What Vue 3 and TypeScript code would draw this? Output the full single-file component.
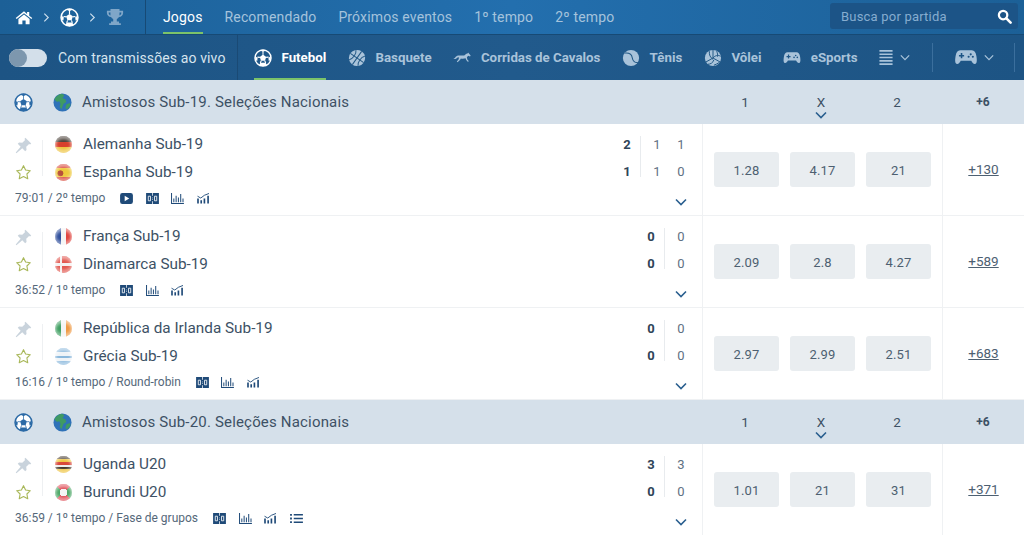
<script setup lang="ts">
interface Game {
  home: string
  away: string
  flags: [string, string]
  info: string
  scores: string[][]
  odds: string[]
  more: string
  play?: boolean
  list?: boolean
}
interface League {
  title: string
  games: Game[]
}

const tabs = ['Jogos', 'Recomendado', 'Próximos eventos', '1º tempo', '2º tempo']
const sports = [
  { name: 'Futebol', icon: 'ball', active: true },
  { name: 'Basquete', icon: 'basket' },
  { name: 'Corridas de Cavalos', icon: 'horse' },
  { name: 'Tênis', icon: 'tennis' },
  { name: 'Vôlei', icon: 'volley' },
  { name: 'eSports', icon: 'pad' },
]
const leagues: League[] = [
  {
    title: 'Amistosos Sub-19. Seleções Nacionais',
    games: [
      { home: 'Alemanha Sub-19', away: 'Espanha Sub-19', flags: ['de', 'es'], info: '79:01 / 2º tempo', scores: [['2', '1'], ['1', '1'], ['1', '0']], odds: ['1.28', '4.17', '21'], more: '+130', play: true },
      { home: 'França Sub-19', away: 'Dinamarca Sub-19', flags: ['fr', 'dk'], info: '36:52 / 1º tempo', scores: [['0', '0'], ['0', '0']], odds: ['2.09', '2.8', '4.27'], more: '+589' },
      { home: 'República da Irlanda Sub-19', away: 'Grécia Sub-19', flags: ['ie', 'gr'], info: '16:16 / 1º tempo / Round-robin', scores: [['0', '0'], ['0', '0']], odds: ['2.97', '2.99', '2.51'], more: '+683' },
    ],
  },
  {
    title: 'Amistosos Sub-20. Seleções Nacionais',
    games: [
      { home: 'Uganda U20', away: 'Burundi U20', flags: ['ug', 'bi'], info: '36:59 / 1º tempo / Fase de grupos', scores: [['3', '0'], ['3', '0']], odds: ['1.01', '21', '31'], more: '+371', list: true },
    ],
  },
]
</script>

<template>
  <div class="page">
    <header class="top">
      <div class="crumbs">
        <svg class="home" viewBox="0 0 20 16"><path d="M10 1 0.8 8.600l1 1.200L10 3.200l8.200 6.600 1-1.200L15.800 6V2h-2.400v2L10 1zM3.800 9.600V15.400h4.400v-4h3.600v4h4.400V9.600L10 4.600 3.800 9.600z" fill="#fff" /></svg>
        <svg class="gt" viewBox="0 0 8 12"><path d="M1.500 1.500 6 6l-4.500 4.500" /></svg>
        <svg class="sport" viewBox="0 0 20 20">
          <use href="#ball" />
        </svg>
        <svg class="gt" viewBox="0 0 8 12"><path d="M1.500 1.500 6 6l-4.500 4.500" /></svg>
        <svg class="cup" viewBox="0 0 20 20"><path d="M5 1h10v2h4v2.500c0 2.600-2 4.300-4.600 4.600-.6 1-1.400 1.700-2.400 2.100V15h2.500v2h2v2H3.500v-2h2v-2H8v-2.800c-1-.4-1.800-1.100-2.400-2.100C3 9.800 1 8.100 1 5.500V3h4V1zM3 5v.5c0 1.300.8 2.300 2 2.700A12 12 0 0 1 5 5H3zm12 0c0 1.100 0 2.200-.1 3.200 1.300-.4 2.100-1.400 2.100-2.700V5h-2z" fill="#7fa6c8" /></svg>
      </div>
      <nav class="tabs">
        <a v-for="(t, i) in tabs" :key="t" class="tab" :class="{ on: i === 0 }">{{ t }}</a>
      </nav>
      <div class="search">
        <span>Busca por partida</span>
        <svg viewBox="0 0 16 16"><circle cx="6.500" cy="6.500" r="4.500" fill="none" stroke="#fff" stroke-width="2.400" /><path d="m10 10 4.500 4.500" stroke="#fff" stroke-width="2.800" stroke-linecap="round" /></svg>
      </div>
    </header>

    <div class="sub">
      <div class="live">
        <span class="toggle"><i></i></span>
        <span>Com transmissões ao vivo</span>
      </div>
      <div class="sports">
        <a v-for="s in sports" :key="s.name" class="sp" :class="{ on: s.active }">
          <svg class="sp-ic" :viewBox="s.icon === 'horse' ? '0 0 24 24' : s.icon === 'pad' ? '0 0 22 20' : '0 0 20 20'">
            <use v-if="s.icon === 'ball'" href="#ball" />
            <g v-else-if="s.icon === 'basket'" transform="rotate(35 10 10)">
              <circle cx="10" cy="10" r="9" fill="#a9c3da" />
              <path d="M10 1v18M1 10h18M4 3.500c3 3 3 10 0 13M16 3.500c-3 3-3 10 0 13" fill="none" stroke="#215784" stroke-width="1.100" />
            </g>
            <path v-else-if="s.icon === 'horse'" d="M0.500 13c1.500-.3 2.500-1.800 3.500-3 1-1 2.200-1.500 4-1.500h7c1.500-1.600 3.200-2.700 5-3l.5-1 .5 1.200 2.500 3-.8 1.300-2.400-.9-1.800 1.800.6 3 1.900 2.100-1 1.300-2.400-2.600-.8-2.400c-1.800.7-4.500.8-6.300.4l-1.200 2-3.200 2.800-1-1 2.300-2.600.6-2.600-1.500-.4C4.800 12.500 3 14 .5 13z" fill="#a9c3da" />
            <g v-else-if="s.icon === 'tennis'">
              <circle cx="10" cy="10" r="9" fill="#a9c3da" />
              <path d="M2.800 4.500c4.500-.5 8 1 8.500 5s3.500 6 6.200 5.500" fill="none" stroke="#215784" stroke-width="1.200" />
            </g>
            <g v-else-if="s.icon === 'volley'">
              <circle cx="10" cy="10" r="9" fill="#a9c3da" />
              <path d="M10 10V1M10 10l8 4.500M10 10l-8 4.500M6 2.500c-.5 4 1 7 4 9M18.500 8c-3-1.500-6-1-8.500 2M4 17c3 0 6-1.500 7-5M14 2.500c1 2 1.500 4 1 6M17 15c-2 1-4 2.500-6 3" fill="none" stroke="#215784" stroke-width="1.100" />
            </g>
            <use v-else href="#pad" />
          </svg>
          <span>{{ s.name }}</span>
        </a>
        <div class="menu-ic">
          <svg class="bars" viewBox="0 0 14 16"><path d="M0 1h14M0 4.500h14M0 8h14M0 11.500h14M0 15h14" stroke="#a9c3da" stroke-width="1.800" /></svg>
          <svg class="dn" viewBox="0 0 12 8"><path d="m1 1.500 5 5 5-5" /></svg>
        </div>
        <div class="pad-box">
          <svg class="pad-big" viewBox="0 0 22 20"><use href="#pad" /></svg>
          <svg class="dn" viewBox="0 0 12 8"><path d="m1 1.500 5 5 5-5" /></svg>
        </div>
      </div>
    </div>

    <section v-for="l in leagues" :key="l.title">
      <div class="league">
        <div class="lg-left">
          <svg class="lg-ball" viewBox="0 0 20 20"><use href="#ball-dark" /></svg>
          <svg class="globe" viewBox="0 0 20 20">
            <circle cx="10" cy="10" r="9.500" fill="#2f72b8" />
            <path d="M9 .8C5.500 1.500 2.500 4 1.500 7l3 2.500 2-1 1.500 3-1 3 2 2.500 2-5.500 3-2-1-3-3-1 2-3.500zM14 12l3.500-1.500 1 2.500-3.500 4-2-1z" fill="#3f9a63" />
          </svg>
          <span>{{ l.title }}</span>
        </div>
        <div class="lg-odds">
          <span>1</span>
          <span class="x">X<svg viewBox="0 0 12 8"><path d="m1 1.500 5 5 5-5" /></svg></span>
          <span>2</span>
        </div>
        <div class="lg-more">+6</div>
      </div>

      <div v-for="g in l.games" :key="g.home" class="game">
        <div class="main">
          <div class="teams">
            <div class="marks">
              <svg class="pin" viewBox="0 0 18 18"><path d="M11 .8l6.200 6.200-1.200 1-1.100-.7-3 3 .3 3.400-1.400 1.400-3.100-3.100L1.500 17.200l-.7-.7 5.200-6.200-3.100-3.100 1.400-1.400 3.400.3 3-3-.7-1.100z" fill="#c9d3dc" /></svg>
              <svg class="star" viewBox="0 0 18 18"><path d="m9 1.800 2.200 4.600 5 .7-3.600 3.500.9 5L9 13.200l-4.500 2.400.9-5L1.800 7.100l5-.7z" fill="none" stroke="#a9b85a" stroke-width="1.200" stroke-linejoin="round" /></svg>
            </div>
            <div class="names">
              <div class="name"><i class="flag" :class="g.flags[0]"></i>{{ g.home }}</div>
              <div class="name"><i class="flag" :class="g.flags[1]"></i>{{ g.away }}</div>
            </div>
            <div class="score">
              <div v-for="(c, i) in g.scores" :key="i" class="col" :class="{ first: i === 0 }">
                <b v-if="i === 0">{{ c[0] }}</b><span v-else>{{ c[0] }}</span>
                <b v-if="i === 0">{{ c[1] }}</b><span v-else>{{ c[1] }}</span>
              </div>
            </div>
          </div>
          <div class="info">
            <span class="time">{{ g.info }}</span>
            <svg v-if="g.play" class="ic" viewBox="0 0 14 12"><rect width="14" height="12" rx="2.500" fill="#1f4a78" /><path d="M5 3v6l5-3z" fill="#fff" /></svg>
            <svg class="ic" viewBox="0 0 14 12"><path d="M0 0h14v12H0z" fill="#1f4a78" /><path d="M7 0v3M7 9v3M7 5v.8M7 6.800v.8" stroke="#fff" stroke-width=".8" /><path d="M2.400 3.500h2.400v5H2.400zM9.200 3.500h2.400v5H9.200z" fill="none" stroke="#fff" stroke-width=".9" /></svg>
            <svg class="ic" viewBox="0 0 14 12"><path d="M.5 0v11.500H14M3 6v4M5.500 3v7M8 5v5M10.500 1v9M13 6v4" fill="none" stroke="#1f4a78" stroke-width="1.100" /></svg>
            <svg class="ic" viewBox="0 0 14 12"><path d="M1 6v5.500M4.500 8v3.500M8 6v5.500M12 3v8.500" fill="none" stroke="#1f4a78" stroke-width="1.800" /><path d="M.5 3.500l3.500 2L8 2.500l5-2" fill="none" stroke="#1f4a78" /></svg>
            <svg v-if="g.list" class="ic" viewBox="0 0 14 12"><path d="M4 2h10M4 6h10M4 10h10" stroke="#1f4a78" stroke-width="1.600" /><path d="M0 1h2v2H0zM0 5h2v2H0zM0 9h2v2H0z" fill="#1f4a78" /></svg>
          </div>
          <svg class="expand" viewBox="0 0 12 8"><path d="m1 1.500 5 5 5-5" /></svg>
        </div>
        <div class="odds">
          <button v-for="o in g.odds" :key="o" class="odd">{{ o }}</button>
        </div>
        <div class="more"><a>{{ g.more }}</a></div>
      </div>
    </section>

    <svg width="0" height="0" class="defs">
      <defs>
        <g id="ball">
          <circle cx="10" cy="10" r="8.900" fill="none" stroke="#fff" stroke-width="1.600" />
          <path d="M10 6.200l3.600 2.600-1.400 4.200H7.800L6.400 8.800zM6.800 1.500 10 3.400l3.200-1.900-.6-.8H7.400zM1.300 8l2.700 1.800-.4 3.400-2-1.100zM18.700 8 16 9.800l.4 3.400 2-1.100zM5.800 17.800l1.200-2.500h6l1.200 2.500-4.200 1.300z" fill="#fff" />
          <path d="M10 3v3.500M3.800 9l2.800.3M16.200 9l-2.800.3M7 15.500 8 13M13 15.500 12 13" stroke="#fff" stroke-width="1.200" />
        </g>
        <g id="ball-dark">
          <circle cx="10" cy="10" r="8.900" fill="#fff" stroke="#2b6aa6" stroke-width="1.600" />
          <path d="M10 6.200l3.600 2.600-1.400 4.200H7.800L6.400 8.800zM6.800 1.500 10 3.400l3.200-1.900-.6-.8H7.400zM1.300 8l2.700 1.800-.4 3.400-2-1.100zM18.700 8 16 9.800l.4 3.400 2-1.100zM5.800 17.800l1.200-2.500h6l1.200 2.500-4.200 1.300z" fill="#2b6aa6" />
          <path d="M10 3v3.500M3.800 9l2.800.3M16.200 9l-2.800.3M7 15.500 8 13M13 15.500 12 13" stroke="#2b6aa6" stroke-width=".8" />
        </g>
        <path id="pad" d="M5.500 3h11c2.500 0 3.800 2 4.400 5.500.5 3 .8 6.500-.8 7.500-1.500.8-3-.6-4.100-2.800H6c-1.100 2.200-2.600 3.600-4.100 2.800-1.600-1-1.300-4.500-.8-7.500C1.700 5 3 3 5.500 3zM6 5.800v1.700H4.300V9H6v1.700h1.500V9h1.700V7.500H7.500V5.800H6zm9.500.2a1 1 0 1 0 0 2 1 1 0 0 0 0-2zm-2 2.300a1 1 0 1 0 0 2 1 1 0 0 0 0-2zm4 0a1 1 0 1 0 0 2 1 1 0 0 0 0-2z" fill="#a9c3da" fill-rule="evenodd" />
      </defs>
    </svg>
  </div>
</template>

<style scoped>
.page {
  width: 1024px;
  height: 535px;
  overflow: hidden;
  font-family: Roboto, "Liberation Sans", sans-serif;
  background: #fff;
  color: #3d5165;
}
.defs {
  position: absolute;
}
.top {
  height: 34px;
  display: flex;
  align-items: center;
  background: linear-gradient(90deg, #1c6097 0%, #236fae 50%, #1c6097 100%);
  border-bottom: 1px solid #174a75;
  box-sizing: content-box;
}
.crumbs {
  width: 146px;
  height: 34px;
  padding-left: 15px;
  box-sizing: border-box;
  display: flex;
  align-items: center;
  gap: 10px;
  border-right: 1px solid #174a75;
}
.home {
  width: 18px;
  height: 15px;
}
.gt {
  width: 7px;
  height: 11px;
  fill: none;
  stroke: #cfe0ee;
  stroke-width: 1.300;
}
.sport {
  width: 19px;
  height: 19px;
}
.cup {
  width: 18px;
  height: 18px;
}
.tabs {
  display: flex;
  gap: 22px;
  margin-left: 17px;
  height: 34px;
}
.tab {
  font-size: 14px;
  line-height: 34px;
  letter-spacing: 0.15px;
  color: #a5c3dc;
  position: relative;
}
.tab.on {
  color: #fff;
}
.tab.on::after {
  content: "";
  position: absolute;
  left: 0;
  right: 0;
  bottom: 0;
  height: 2px;
  background: #7cc36a;
}
.search {
  margin-left: auto;
  margin-right: 6px;
  margin-bottom: 2px;
  width: 188px;
  height: 26px;
  background: #1c5487;
  border-radius: 3px;
  display: flex;
  align-items: center;
  justify-content: space-between;
  padding: 0 6px 0 11px;
  box-sizing: border-box;
  font-size: 13px;
  letter-spacing: 0.2px;
  color: #86add0;
}
.search svg {
  width: 15px;
  height: 15px;
}
.sub {
  height: 45px;
  display: flex;
  background: linear-gradient(90deg, #1d5484, #215a8c 50%, #1d5484);
}
.live {
  width: 238px;
  display: flex;
  align-items: center;
  gap: 11px;
  padding-left: 9px;
  box-sizing: border-box;
  font-size: 14px;
  letter-spacing: 0.12px;
  color: #d7e4ee;
  border-right: 1px solid #1a4a75;
}
.toggle {
  width: 38px;
  height: 18px;
  border-radius: 9px;
  background: #d3dfea;
  display: block;
}
.toggle i {
  display: block;
  width: 18px;
  height: 18px;
  border-radius: 50%;
  background: #7d97ae;
}
.sports {
  display: flex;
  flex: 1;
  padding-left: 16px;
  gap: 21.700px;
  align-items: stretch;
}
.sp {
  display: flex;
  align-items: center;
  gap: 9.500px;
  font-size: 13.300px;
  font-weight: 700;
  color: #a9c3da;
  position: relative;
}
.sp.on {
  color: #fff;
}
.sp.on::after {
  content: "";
  position: absolute;
  left: 0;
  right: 0;
  bottom: 0;
  height: 2px;
  background: #7cc36a;
}
.sp-ic {
  width: 18px;
  height: 18px;
}
.menu-ic,
.pad-box {
  display: flex;
  align-items: center;
}
.menu-ic {
  gap: 7px;
}
.pad-box {
  gap: 6px;
}
.bars {
  width: 14px;
  height: 15px;
}
.dn {
  width: 10px;
  height: 7px;
  fill: none;
  stroke: #a9c3da;
  stroke-width: 1.500;
}
.pad-box {
  height: 29px;
  align-self: center;
  width: 83px;
  box-sizing: border-box;
  justify-content: center;
  border-left: 1px solid #3b6f9d;
  border-right: 1px solid #3b6f9d;
}
.pad-big {
  width: 24px;
  height: 21px;
}
.league {
  height: 44px;
  display: flex;
  align-items: center;
  background: #d5e0ea;
}
.lg-left {
  width: 702px;
  display: flex;
  align-items: center;
  padding-left: 14px;
  box-sizing: border-box;
  font-size: 15px;
  letter-spacing: 0.18px;
  color: #3d5165;
}
.lg-ball {
  width: 19px;
  height: 19px;
}
.globe {
  width: 19px;
  height: 19px;
  margin-left: 20px;
  margin-right: 10px;
}
.lg-odds {
  display: grid;
  grid-template-columns: repeat(3, 76px);
  width: 240px;
  padding-left: 5px;
  box-sizing: border-box;
  text-align: center;
  font-size: 13.500px;
}
.x {
  position: relative;
}
.x svg {
  position: absolute;
  left: 32px;
  top: 17px;
  width: 12px;
  height: 8px;
  fill: none;
  stroke: #2a5f8f;
  stroke-width: 1.600;
}
.lg-more {
  flex: 1;
  text-align: center;
  font-size: 12px;
  font-weight: 700;
}
.game {
  height: 92px;
  display: flex;
  border-bottom: 1px solid #eff1f3;
  box-sizing: border-box;
}
.main {
  width: 702px;
  position: relative;
  border-right: 1px solid #eff1f3;
  box-sizing: content-box;
  padding-top: 6px;
}
.teams {
  display: flex;
  height: 57px;
}
.marks {
  width: 43px;
  margin-right: 12px;
  padding-left: 15px;
  box-sizing: border-box;
  display: flex;
  flex-direction: column;
  position: relative;
  padding-top: 7px;
  gap: 10px;
}
.marks::after {
  content: "";
  position: absolute;
  right: 0;
  top: 10px;
  height: 36px;
  border-right: 1px solid #eef0f2;
}
.pin {
  width: 17px;
  height: 17px;
}
.star {
  width: 17px;
  height: 17px;
}
.names {
  flex: 1;
}
.name {
  height: 28px;
  display: flex;
  align-items: center;
  font-size: 15.300px;
  color: #3d5165;
}
.flag {
  width: 17px;
  height: 17px;
  border-radius: 50%;
  margin-right: 11px;
  background: #ddd;
  flex: none;
  box-shadow: inset 0 3px 3px rgba(255, 255, 255, 0.5), inset 0 -3px 3px rgba(255, 255, 255, 0.4);
}
.flag.de { background: linear-gradient(#4a4038 33%, #d8402c 33% 66%, #eec33d 66%); }
.flag.es { background: radial-gradient(circle at 32% 55%, #b8503a 18%, transparent 22%), linear-gradient(#d9483a 24%, #efc93c 24% 76%, #d9483a 76%); }
.flag.fr { background: linear-gradient(90deg, #2f4f9c 33%, #f3f3f3 33% 66%, #e0453f 66%); }
.flag.dk { background: linear-gradient(90deg, transparent 30%, #f5f0f0 30% 44%, transparent 44%), linear-gradient(#e2574f 42%, #f5f0f0 42% 58%, #e2574f 58%); }
.flag.ie { background: linear-gradient(90deg, #41a063 33%, #f3f3f3 33% 66%, #ef9840 66%); }
.flag.gr { background: linear-gradient(#8ab8dc 25%, #eef3f7 25% 45%, #8ab8dc 45% 60%, #eef3f7 60% 78%, #8ab8dc 78%); }
.flag.ug { background: linear-gradient(#403428 20%, #eec33d 20% 38%, #d9483a 38% 55%, #eee 55% 62%, #403428 62% 78%, #eec33d 78%); }
.flag.bi { background: radial-gradient(circle, #f5f5f5 30%, transparent 33%), conic-gradient(#e0505a 0 45deg, #4ea868 45deg 135deg, #e0505a 135deg 225deg, #4ea868 225deg 315deg, #e0505a 315deg); }
.score {
  display: flex;
  padding: 7px 9px 0 0;
  font-size: 13px;
  text-align: center;
  align-items: flex-start;
}
.col {
  width: 24px;
  display: flex;
  flex-direction: column;
  position: relative;
}
.col > * {
  height: 27px;
  line-height: 16px;
  flex: none;
}
.col b {
  font-weight: 700;
  color: #2f4458;
  font-size: 13px;
}
.col span {
  color: #5f7183;
}
.col.first {
  width: 28px;
  margin-right: 4px;
}
.col.first::after {
  content: "";
  position: absolute;
  right: 0;
  top: -1px;
  height: 41px;
  border-right: 1px solid #e8ebee;
}
.info {
  display: flex;
  align-items: center;
  padding-left: 15px;
  height: 22px;
  font-size: 12px;
  color: #55687a;
}
.time {
  margin-right: 9px;
}
.ic {
  width: 13px;
  height: 11px;
  margin: 0 6.500px 0 6px;
}
.expand {
  position: absolute;
  right: 15px;
  bottom: 9px;
  width: 12px;
  height: 8px;
  fill: none;
  stroke: #2a5f8f;
  stroke-width: 1.600;
}
.odds {
  width: 240px;
  display: flex;
  gap: 11px;
  padding: 28px 0 0 11px;
  box-sizing: border-box;
  border-right: 1px solid #eff1f3;
}
.odd {
  width: 65px;
  height: 35px;
  border: 0;
  border-radius: 3px;
  background: #e9edf0;
  font-family: inherit;
  font-size: 13px;
  letter-spacing: 0.2px;
  color: #4d5f70;
  padding: 1px 0 0;
}
.more {
  flex: 1;
  padding-top: 37px;
  text-align: center;
  font-size: 13.500px;
}
.more a {
  text-decoration: underline;
  color: #4d6072;
}
</style>
